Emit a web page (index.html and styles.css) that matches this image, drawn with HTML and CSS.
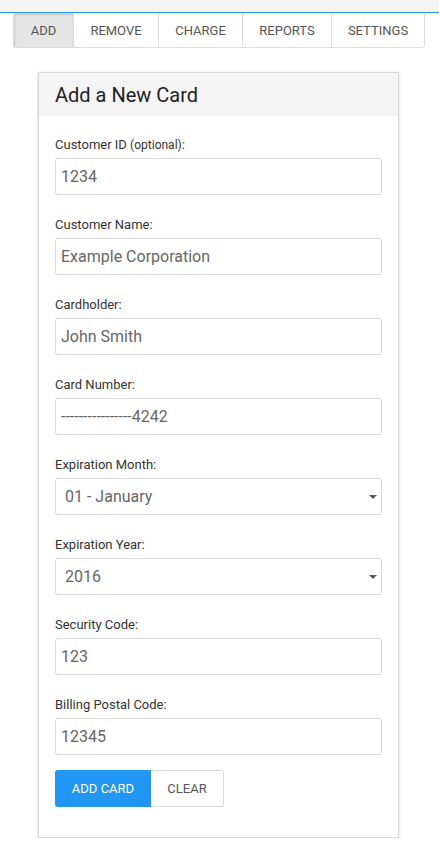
FILE: index.html
```html
<!DOCTYPE html>
<html>
<head>
<meta charset="utf-8">
<link rel="stylesheet" href="styles.css">
</head>
<body>
<div class="topbar"></div>
<nav class="tabs">
  <a class="tab active">ADD</a>
  <a class="tab">REMOVE</a>
  <a class="tab">CHARGE</a>
  <a class="tab">REPORTS</a>
  <a class="tab">SETTINGS</a>
</nav>
<div class="card">
  <div class="card-head">Add a New Card</div>
  <form class="card-body">
    <div class="field">
      <label>Customer ID <small>(optional)</small>:</label>
      <div class="input">1234</div>
    </div>
    <div class="field">
      <label>Customer Name:</label>
      <div class="input">Example Corporation</div>
    </div>
    <div class="field">
      <label>Cardholder:</label>
      <div class="input">John Smith</div>
    </div>
    <div class="field">
      <label>Card Number:</label>
      <div class="input">----------------4242</div>
    </div>
    <div class="field">
      <label>Expiration Month:</label>
      <div class="input select">01 - January<span class="caret"></span></div>
    </div>
    <div class="field">
      <label>Expiration Year:</label>
      <div class="input select">2016<span class="caret"></span></div>
    </div>
    <div class="field">
      <label>Security Code:</label>
      <div class="input">123</div>
    </div>
    <div class="field">
      <label>Billing Postal Code:</label>
      <div class="input">12345</div>
    </div>
    <div class="buttons">
      <button type="button" class="btn primary">ADD CARD</button>
      <button type="button" class="btn">CLEAR</button>
    </div>
  </form>
</div>
</body>
</html>
```
FILE: styles.css
```css
* { box-sizing: border-box; }
html, body { margin: 0; padding: 0; background: #fff; }
body {
  font-family: Roboto, "Liberation Sans", sans-serif;
  color: #333;
  width: 439px;
}
.topbar {
  height: 13px;
  background: #f4f4f4;
  border-bottom: 1px solid #2196f3;
}
.tabs {
  display: flex;
  margin: 0 14px 0 13px;
  height: 35px;
  border: 1px solid #dcdcdc;
  border-top: none;
  border-radius: 0 0 3px 3px;
}
.tab {
  display: flex;
  align-items: center;
  justify-content: center;
  font-size: 13px;
  color: #555;
  border-left: 1px solid #dcdcdc;
  flex: none;
}
.tab:first-child { border-left: none; }
.tab:nth-child(1) { width: 59px; }
.tab:nth-child(2) { width: 85px; }
.tab:nth-child(3) { width: 84px; }
.tab:nth-child(4) { width: 89px; }
.tab:nth-child(5) { flex: 1; }
.tab.active {
  background: #e6e6e6;
  box-shadow: inset 1px 2px 3px rgba(0,0,0,0.12);
}
.card {
  margin: 24px 40px 0 38px;
  border: 1px solid #d8d8d8;
  box-shadow: 0 1px 3px rgba(0,0,0,0.18);
  height: 766px;
}
.card-head {
  height: 43px;
  background: #f4f4f4;
  font-size: 20px;
  color: #222;
  padding: 10px 0 0 16px;
  line-height: 24px;
}
.card-body {
  padding: 21px 16px 0 16px;
}
.field { margin-bottom: 22px; }
.field label {
  display: block;
  height: 16px;
  font-size: 13px;
  line-height: 16px;
  color: #333;
  margin-bottom: 5px;
}
.field label small { font-size: 12px; line-height: 1; }
.input {
  height: 37px;
  border: 1px solid #dadada;
  border-radius: 3px;
  font-size: 16px;
  color: #666;
  line-height: 35px;
  padding-left: 5px;
  position: relative;
}
.input.select { padding-left: 9px; }
.caret {
  position: absolute;
  right: 4px;
  top: 16px;
  width: 0;
  height: 0;
  border-left: 4px solid transparent;
  border-right: 4px solid transparent;
  border-top: 4px solid #555;
}
.buttons {
  display: flex;
  margin-top: -7px;
}
.btn {
  height: 37px;
  font-family: Roboto, "Liberation Sans", sans-serif;
  font-size: 13px;
  color: #555;
  background: #fff;
  border: 1px solid #dadada;
  border-left: none;
  border-radius: 0 3px 3px 0;
  width: 73px;
  padding: 0;
}
.btn.primary {
  width: 96px;
  background: #2196f3;
  border: none;
  color: #fff;
  border-radius: 3px 0 0 3px;
}
```
